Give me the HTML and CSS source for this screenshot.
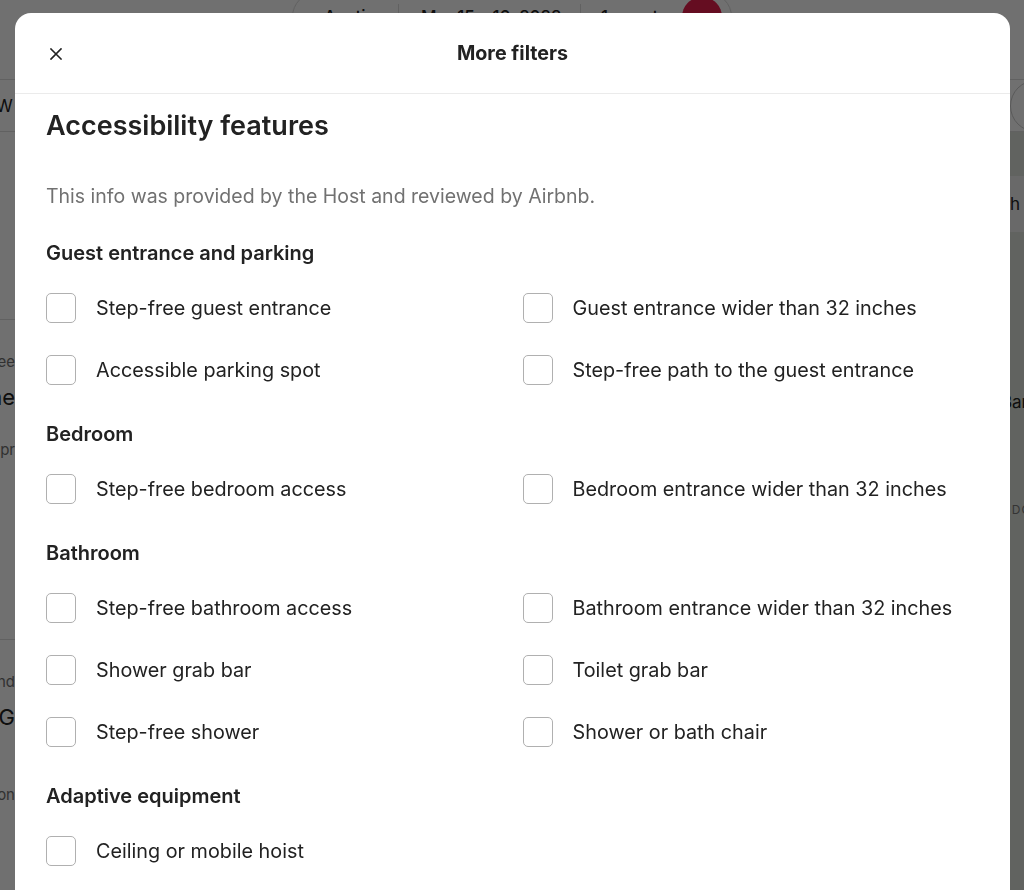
FILE: index.html
```html
<!DOCTYPE html>
<html lang="en">
<head>
<meta charset="utf-8">
<title>More filters</title>
<link rel="stylesheet" href="styles.css">
</head>
<body>
<div class="page">
  <header class="topbar">
    <div class="search-pill">
      <span class="pill-item pi1">Austin</span>
      <span class="pill-item pi2">Mar 15 – 16, 2022</span>
      <span class="pill-item pi3">1 guest</span>
      <span class="pill-btn"></span>
    </div>
  </header>
  <div class="filterbar">
    <span class="fb-left">W</span>
    <span class="fb-right"></span>
  </div>
  <div class="main">
    <div class="listings">
      <div class="listing first"></div>
      <div class="listing">
        <div class="l-line small">Entire home · Free</div>
        <div class="l-line big">Cozy home</div>
        <div class="l-line small gap1">Wifi · Kitchen · Free pr</div>
      </div>
      <div class="listing">
        <div class="l-line small">Entire guest suite and</div>
        <div class="l-line big">Guest suite G</div>
        <div class="l-line small gap2">Free cancellation</div>
      </div>
    </div>
    <div class="map">
      <div class="map-band"><span class="map-label">South</span></div>
      <span class="map-label ml2">Clarksville Bar</span>
      <span class="map-label ml3">DOWNTOWN</span>
    </div>
  </div>
</div>

<div class="overlay"></div>

<div class="modal" role="dialog" aria-label="More filters">
  <div class="modal-header">
    <button class="close-btn" aria-label="Close">
      <svg width="16" height="16" viewBox="0 0 32 32" fill="none" stroke="#222" stroke-width="3.2" stroke-linecap="square"><path d="M6 6l20 20M26 6L6 26"/></svg>
    </button>
    <h1 class="modal-title">More filters</h1>
  </div>
  <div class="modal-body">
    <h2 class="section-title">Accessibility features</h2>
    <p class="section-sub">This info was provided by the Host and reviewed by Airbnb.</p>

    <h3 class="group-title">Guest entrance and parking</h3>
    <div class="grid">
      <label class="opt"><span class="box"></span><span>Step-free guest entrance</span></label>
      <label class="opt"><span class="box"></span><span>Guest entrance wider than 32 inches</span></label>
      <label class="opt"><span class="box"></span><span>Accessible parking spot</span></label>
      <label class="opt"><span class="box"></span><span>Step-free path to the guest entrance</span></label>
    </div>

    <h3 class="group-title">Bedroom</h3>
    <div class="grid">
      <label class="opt"><span class="box"></span><span>Step-free bedroom access</span></label>
      <label class="opt"><span class="box"></span><span>Bedroom entrance wider than 32 inches</span></label>
    </div>

    <h3 class="group-title">Bathroom</h3>
    <div class="grid">
      <label class="opt"><span class="box"></span><span>Step-free bathroom access</span></label>
      <label class="opt"><span class="box"></span><span>Bathroom entrance wider than 32 inches</span></label>
      <label class="opt"><span class="box"></span><span>Shower grab bar</span></label>
      <label class="opt"><span class="box"></span><span>Toilet grab bar</span></label>
      <label class="opt"><span class="box"></span><span>Step-free shower</span></label>
      <label class="opt"><span class="box"></span><span>Shower or bath chair</span></label>
    </div>

    <h3 class="group-title">Adaptive equipment</h3>
    <div class="grid">
      <label class="opt"><span class="box"></span><span>Ceiling or mobile hoist</span></label>
    </div>
  </div>
</div>
</body>
</html>
```
FILE: styles.css
```css
* { box-sizing: border-box; }
html, body {
  margin: 0;
  padding: 0;
  width: 1024px;
  height: 890px;
  overflow: hidden;
  font-family: Inter, "Noto Sans", "Liberation Sans", sans-serif;
  color: #222222;
  background: #ffffff;
}

/* ---------- background page ---------- */
.page {
  width: 1024px;
  height: 890px;
  display: flex;
  flex-direction: column;
  overflow: hidden;
}
.topbar {
  flex: none;
  height: 80px;
  display: flex;
  justify-content: center;
  border-bottom: 1px solid #dddddd;
}
.search-pill {
  margin-top: -8px;
  width: 440px;
  height: 50px;
  border: 1px solid #dddddd;
  border-radius: 25px;
  display: flex;
  align-items: center;
  padding-right: 9px;
  font-size: 17px;
  font-weight: 500;
  box-shadow: 0 1px 2px rgba(0,0,0,0.08);
}
.pill-item {
  border-right: 1px solid #dddddd;
  line-height: 26px;
  white-space: nowrap;
}
.pi1 { width: 106px; padding-left: 31px; }
.pi2 { width: 182px; padding-left: 22px; }
.pi3 { padding-left: 20px; border-right: none; }
.pill-btn {
  margin-left: auto;
  width: 40px;
  height: 40px;
  border-radius: 50%;
  background: #e61e4d;
}
.filterbar {
  flex: none;
  height: 52px;
  display: flex;
  align-items: center;
  justify-content: space-between;
  border-bottom: 1px solid #dddddd;
}
.fb-left {
  font-size: 17px;
  margin-left: -4px;
}
.fb-right {
  width: 52px;
  height: 52px;
  border: 1px solid #cccccc;
  border-radius: 50%;
  margin-right: -38px;
}
.main {
  flex: 1;
  min-height: 0;
  display: flex;
}
.listings {
  flex: none;
  width: 15px;
  overflow: hidden;
  display: flex;
  flex-direction: column;
}
.listing {
  flex: none;
  display: flex;
  flex-direction: column;
  align-items: flex-end;
  padding-top: 30px;
  height: 320px;
  border-bottom: 1px solid #dddddd;
}
.listing.first { height: 188px; padding-top: 0; }
.l-line {
  white-space: nowrap;
  display: flex;
  justify-content: flex-end;
  width: 15px;
}
.l-line.small { font-size: 15px; color: #717171; line-height: 24px; }
.l-line.big { font-size: 22px; line-height: 36px; margin-top: 5px; }
.l-line.gap1 { margin-top: 23px; }
.l-line.gap2 { margin-top: 48px; }
.map {
  flex: 1;
  background: #dce2da;
  position: relative;
  overflow: hidden;
}
.map-band {
  margin-top: 44px;
  height: 56px;
  background: #eeeeee;
  display: flex;
  align-items: center;
  justify-content: flex-end;
}
.map-band .map-label { position: static; margin-right: 4px; }
.map-label { position: absolute; font-size: 17px; color: #222; white-space: nowrap; }
.ml2 { right: -4px; top: 260px; }
.ml3 { right: -72px; top: 370px; font-size: 12px; letter-spacing: 1px; color: #777; }

/* ---------- overlay ---------- */
.overlay {
  position: fixed;
  inset: 0;
  background: rgba(0, 0, 0, 0.56);
}

/* ---------- modal ---------- */
.modal {
  position: fixed;
  left: 15px;
  top: 13px;
  width: 995px;
  height: 900px;
  background: #ffffff;
  border-radius: 16px 16px 0 0;
  overflow: hidden;
  display: flex;
  flex-direction: column;
}
.modal-header {
  height: 81px;
  flex: none;
  display: flex;
  align-items: center;
  justify-content: center;
  position: relative;
  border-bottom: 1px solid #ebebeb;
}
.close-btn {
  position: absolute;
  left: 25px;
  top: 25px;
  width: 32px;
  height: 32px;
  border: none;
  background: none;
  padding: 0;
  display: flex;
  align-items: center;
  justify-content: center;
}
.modal-title {
  margin: 0;
  font-size: 19.7px;
  font-weight: 700;
  line-height: 24px;
}
.modal-body {
  padding: 14px 31px 0 31px;
}
.section-title {
  margin: 0;
  font-size: 27px;
  font-weight: 600;
  line-height: 36px;
}
.section-sub {
  margin: 40px 0 0 0;
  font-size: 19.5px;
  line-height: 24px;
  color: #717171;
}
.group-title {
  margin: 33px 0 0 0;
  font-size: 20px;
  font-weight: 600;
  line-height: 24px;
}
.grid + .group-title { margin-top: 37px; }
.grid {
  display: grid;
  grid-template-columns: 1fr 1fr;
  column-gap: 20px;
  row-gap: 32px;
  margin-top: 28px;
}
.opt {
  display: flex;
  align-items: center;
  gap: 20px;
  font-size: 19.8px;
  line-height: 24px;
  color: #222222;
  height: 30px;
}
.box {
  flex: none;
  width: 30px;
  height: 30px;
  border: 1.5px solid #b0b0b0;
  border-radius: 5px;
  background: #ffffff;
}
```
